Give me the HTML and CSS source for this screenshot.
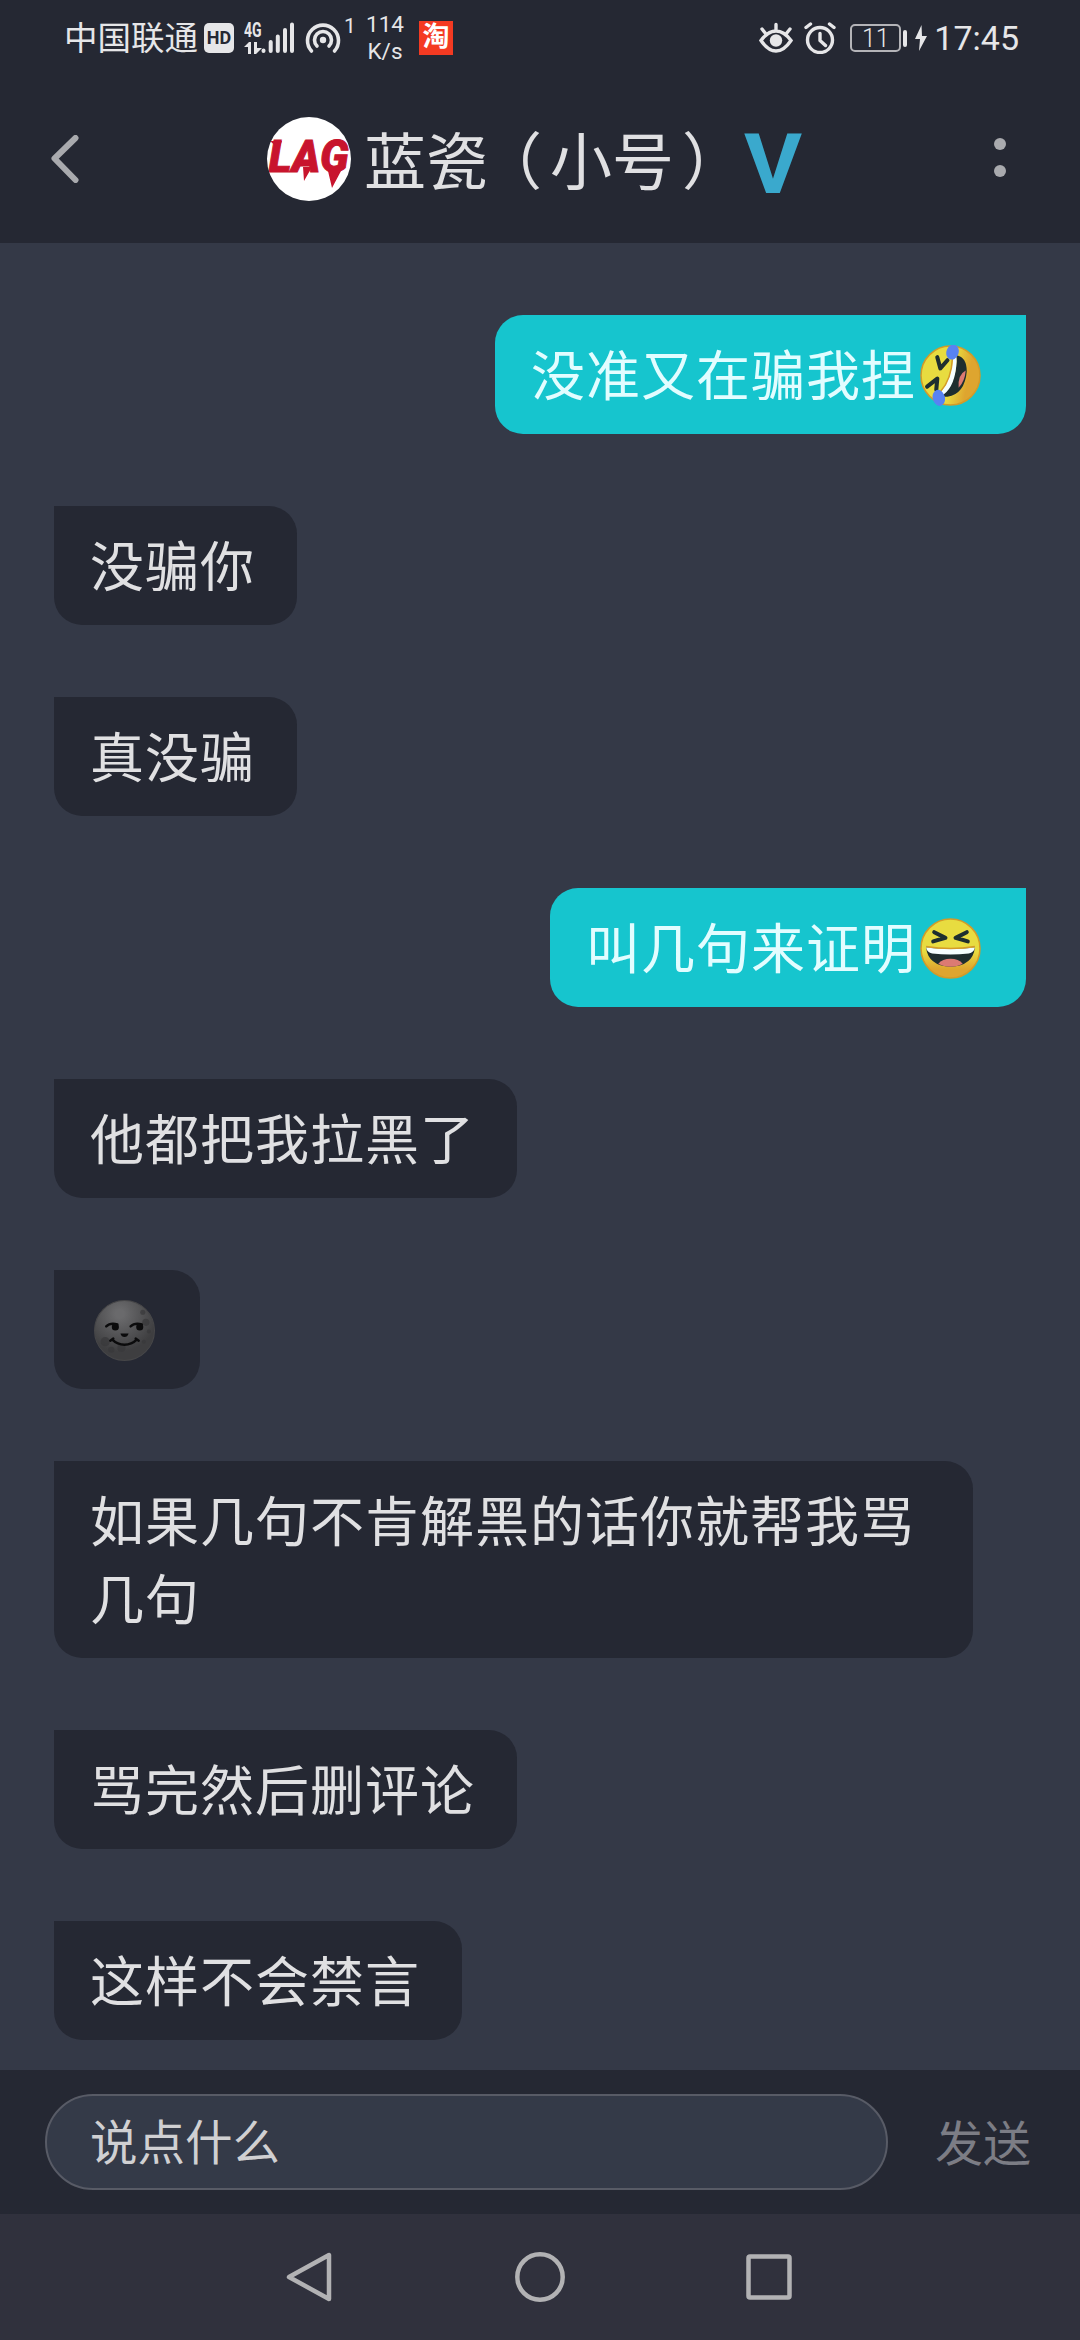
FILE: index.html
```html
<!DOCTYPE html>
<html lang="zh-CN">
<head>
<meta charset="utf-8">
<title>聊天</title>
<link rel="stylesheet" href="styles.css">
</head>
<body>
<div class="screen">
  <div class="status">
    <span class="carrier">中国联通</span>
    <span class="hd">HD</span>
    <div class="signal">
      <div class="net">
        <span class="net-label">4G</span>
        <svg class="net-arrows" width="18" height="12" viewBox="0 0 18 12"><path d="M0 5 5 0h2v12H4V5zM10 0h3v6h5l-6 6h-2z" fill="#e6e6e8"/></svg>
      </div>
      <svg class="bars" width="33" height="32" viewBox="0 0 33 32"><g stroke="#e6e6e8" stroke-width="4" stroke-linecap="round"><path d="M2.5 28.5v.5M9.7 20v9M16.8 14.500v14.500M24 8v21M31 2.500v26.500"/></g></svg>
    </div>
    <svg class="hotspot" width="36" height="32" viewBox="0 0 36 32"><g fill="none" stroke="#e6e6e8" stroke-width="3.600" stroke-linecap="round"><path d="M6.500 29A15.500 15.500 0 1 1 29.500 29"/><path d="M12 24A8.500 8.500 0 1 1 24 24"/></g><circle cx="18" cy="18" r="3.200" fill="#e6e6e8"/></svg>
    <span class="clients">1</span>
    <div class="speed"><span>114</span><span>K/s</span></div>
    <span class="shop">淘</span>
    <div class="status-right">
      <svg width="34" height="32" viewBox="0 0 34 32"><g fill="none" stroke="#e6e6e8" stroke-width="3.400" stroke-linecap="round"><path d="M2 18.500Q9 9 17 9t15 9.500Q25 29 17 29T2 18.500zM17 2.500v5M3 7l4 5M31 7l-4 5"/></g><circle cx="17" cy="18.500" r="6.200" fill="#e6e6e8"/></svg>
      <svg width="32" height="32" viewBox="0 0 32 32"><g fill="none" stroke="#e6e6e8" stroke-width="3.400" stroke-linecap="round" stroke-linejoin="round"><circle cx="16" cy="18" r="12.500"/><path d="M16 11.500v7l5.500 5M2 5.500 6.500 2M30 5.500 25.500 2"/></g></svg>
      <div class="battery"><span class="level">11</span><i class="nub"></i></div>
      <svg class="bolt" width="12" height="26" viewBox="0 0 12 26"><path d="M6.500 0 0 14h5L4 26l8-15H7z" fill="#e6e6e8"/></svg>
      <span class="time">17:45</span>
    </div>
  </div>

  <div class="header">
    <svg class="back" width="28" height="48" viewBox="0 0 28 48"><path d="M24.500 3 3.500 23.500 24.500 45" fill="none" stroke="#a9aaae" stroke-width="6" stroke-linecap="round" stroke-linejoin="round"/></svg>
    <div class="peer">
      <span class="avatar"><span class="avatar-text">LAG</span><svg class="fangs" width="84" height="84" viewBox="0 0 84 84"><path d="M36 50h9l-8 14zM61 54h13L65 71zM3 24h12l-3 8z" fill="#c8142d"/></svg></span>
      <span class="name">蓝瓷<span class="open">（</span>小号<span class="close">）</span></span>
      <span class="vip">V</span>
    </div>
    <div class="more"><i></i><i></i></div>
  </div>

  <div class="chat">
    <div class="bubble mine">没准又在骗我捏<svg class="emoji" viewBox="0 0 60 60"><defs><linearGradient id="gold" x1="0" y1=".4" x2="1" y2=".6"><stop offset=".5" stop-color="#e8dc40"/><stop offset=".8" stop-color="#dea52f"/></linearGradient></defs><circle cx="30" cy="30" r="29" fill="url(#gold)" stroke="#d49b27" stroke-width="1.500"/><path d="M36 10Q46 12 46 26 44 48 27 51 21 51 21 49 37 36 36 10z" fill="#1e2e2f"/><path d="M45 25Q37 29 38 42 44 36 45 25z" fill="#dc7a73"/><path d="M33 11Q36 9 36 16 35 40 23 49 19 50 20 47 31 34 33 11z" fill="#f5ffff"/><path d="M32 12Q31 34 20 46" fill="none" stroke="#d49b27" stroke-width="1.500"/><path d="m17 12 3 11 7-8M7 41l10-8-1 11" fill="none" stroke="#1e2e2f" stroke-width="4" stroke-linecap="round" stroke-linejoin="round"/><ellipse cx="32" cy="7" rx="6" ry="7.500" fill="#5883f2" transform="rotate(20 32 7)"/><ellipse cx="18.500" cy="52" rx="6" ry="8" fill="#5883f2" transform="rotate(-15 18.500 52)"/></svg></div>
    <div class="bubble">没骗你</div>
    <div class="bubble">真没骗</div>
    <div class="bubble mine">叫几句来证明<svg class="emoji" viewBox="0 0 60 60"><defs><linearGradient id="sun" x1="0" y1="0" x2="0" y2="1"><stop offset=".55" stop-color="#e8dc40"/><stop offset=".85" stop-color="#dea52f"/></linearGradient></defs><circle cx="30" cy="30" r="29" fill="url(#sun)" stroke="#d49b27" stroke-width="1.500"/><path d="M6 29Q30 32 54 29 52 47 30 48 8 47 6 29z" fill="#1e2e2f"/><path d="M18 45Q22 40 30 40t12 5Q37 48 30 48T18 45z" fill="#dc7a73"/><path d="M6 29Q30 32 54 29 53 34 48 35 30 37 12 35 7 34 6 29z" fill="#f5ffff"/><path d="M6 28Q30 32 54 28" fill="none" stroke="#d49b27" stroke-width="1.500"/><path d="m14 14 11 5.500L13 23M46 14l-11 5.500L47 23" fill="none" stroke="#1e2e2f" stroke-width="4" stroke-linecap="round" stroke-linejoin="round"/></svg></div>
    <div class="bubble">他都把我拉黑了</div>
    <div class="bubble"><svg class="emoji" viewBox="0 0 60 60"><defs><radialGradient id="moon" cx=".42" cy=".22" r=".7"><stop offset=".1" stop-color="#6a6a6c"/><stop offset=".9" stop-color="#3e3e40"/></radialGradient></defs><circle cx="30" cy="30" r="29.500" fill="url(#moon)" stroke="#464648"/><g fill="#38383a" opacity=".7"><circle cx="11" cy="41" r="4.500"/><circle cx="17" cy="49" r="3"/><circle cx="27" cy="47" r="4"/><circle cx="51" cy="22" r="3.500"/><circle cx="48" cy="12" r="2.500"/><circle cx="54" cy="31" r="2"/><circle cx="49" cy="41" r="2"/></g><g fill="none" stroke="#0b0b0c" stroke-width="2.400" stroke-linecap="round"><path d="M12 26Q16 22 23 24M36 26Q40 22 47 24"/><path d="M18 39Q23 44 30 44t12-5M16 40l3-2M44 40l-3-2"/></g><circle cx="21" cy="26.500" r="3.500" fill="#0b0b0c"/><circle cx="45" cy="26.500" r="3.500" fill="#0b0b0c"/><path d="M26 33h8q-1 3.500-4 3.500T26 33z" fill="#0b0b0c"/></svg></div>
    <div class="bubble">如果几句不肯解黑的话你就帮我骂几句</div>
    <div class="bubble">骂完然后删评论</div>
    <div class="bubble">这样不会禁言</div>
  </div>

  <div class="composer">
    <div class="field">说点什么</div>
    <span class="send">发送</span>
  </div>

  <div class="nav">
    <svg width="50" height="52" viewBox="0 0 50 52"><path d="M43 4v44L3 26z" fill="none" stroke="#b2b2b4" stroke-width="4.500" stroke-linejoin="round"/></svg>
    <svg width="50" height="52" viewBox="0 0 50 52"><circle cx="25" cy="26" r="22.700" fill="none" stroke="#b2b2b4" stroke-width="4.500"/></svg>
    <svg width="50" height="52" viewBox="0 0 50 52"><rect x="4.500" y="5.500" width="41" height="41" rx="1.500" fill="none" stroke="#b2b2b4" stroke-width="4.500"/></svg>
  </div>
</div>
</body>
</html>
```
FILE: styles.css
```css
* { box-sizing: border-box; }
body {
  margin: 0;
  background: #343947;
  font-family: Roboto, "Noto Sans CJK SC", sans-serif;
  color: #e0e0e2;
}
svg { display: block; flex: none; }
.screen {
  width: 1080px;
  height: 2340px;
  display: flex;
  flex-direction: column;
  overflow: hidden;
}

/* status bar */
.status {
  height: 76px;
  flex: none;
  display: flex;
  align-items: center;
  padding: 0 61px 0 64px;
  background: #252833;
  color: #e6e6e8;
}
.carrier { width: 140px; padding-top: 2px; font-size: 33.500px; line-height: 76px; white-space: nowrap; }
.hd {
  width: 30px;
  height: 30px;
  border-radius: 5px;
  background: #e6e6e8;
  color: #252833;
  font-size: 18px;
  font-weight: 700;
  line-height: 30px;
  text-align: center;
}
.signal { display: flex; margin-left: 10px; height: 32px; width: 51px; }
.net { width: 17px; flex: none; display: flex; flex-direction: column; justify-content: space-between; }
.net-label { font-size: 20px; line-height: 16px; font-weight: 700; transform: scaleX(.7); transform-origin: 0 0; }
.hotspot { margin-left: 10px; }
.clients { width: 23px; padding-left: 3px; font-size: 21px; line-height: 24px; align-self: flex-start; margin-top: 14px; }
.speed { width: 42px; display: flex; flex-direction: column; align-items: center; font-size: 22.500px; line-height: 27px; }
.shop {
  width: 34px;
  height: 34px;
  margin-left: 13px;
  background: #f43a22;
  color: #fff;
  font-size: 27px;
  font-weight: 700;
  line-height: 33px;
  text-align: center;
}
.status-right { margin-left: auto; display: flex; align-items: center; }
.status-right > svg + svg { margin-left: 11px; }
.battery { display: flex; align-items: center; gap: 2px; margin-left: 14px; }
.level {
  width: 51px;
  height: 28px;
  border: 2px solid #b4b4b8;
  border-radius: 5px;
  font-size: 25px;
  font-weight: 300;
  line-height: 25px;
  text-align: center;
}
.nub { width: 4px; height: 17px; border-radius: 2px; background: #e6e6e8; }
.bolt { margin-left: 8px; }
.time { margin-left: 7px; font-size: 34px; line-height: 76px; }

/* title bar */
.header {
  height: 167px;
  flex: none;
  display: flex;
  align-items: flex-start;
  padding: 41px 74px 0 51px;
  background: #252833;
}
.back { margin-top: 18px; }
.peer { margin-left: 188px; display: flex; align-items: center; height: 84px; }
.avatar {
  position: relative;
  width: 84px;
  height: 84px;
  border-radius: 50%;
  overflow: hidden;
  background: #fff;
  display: flex;
  align-items: center;
  justify-content: center;
}
.avatar-text {
  font: italic 900 45px Roboto, sans-serif;
  color: #c8142d;
  -webkit-text-stroke: 1px #c8142d;
  transform: translateY(-3px) scaleX(.96);
}
.fangs { position: absolute; left: 0; top: 0; }
.name { margin-left: 13px; width: 380px; padding-top: 9px; font-size: 62px; line-height: 84px; white-space: nowrap; }
/* half-width brackets, spaced by their margins */
.open, .close { font-feature-settings: "halt"; }
.open { margin: 0 8px 0 23px; }
.close { margin-left: 8px; }
.vip {
  padding-top: 12px;
  font-size: 83px;
  line-height: 84px;
  font-weight: 700;
  color: #3aa9cd;
  transform: scaleX(1.07);
  transform-origin: 0 0;
}
.more { margin-left: auto; margin-top: 21px; display: flex; flex-direction: column; gap: 15px; }
.more i { width: 12px; height: 12px; border-radius: 50%; background: #a9aaae; }

/* messages */
.chat {
  flex: 1;
  display: flex;
  flex-direction: column;
  align-items: flex-start;
  gap: 72px;
  padding: 72px 54px 0;
}
.bubble {
  max-width: 919px;
  min-height: 119px;
  padding: 24px 42px 17px 36px;
  border-radius: 0 28px 28px 28px;
  background: #252833;
  font-size: 54px;
  letter-spacing: 1px;
  line-height: 78px;
}
.mine {
  align-self: flex-end;
  border-radius: 28px 0 28px 28px;
  background: #16c5ce;
  color: #e2fdff;
}
.emoji { display: inline-block; width: 61px; height: 61px; margin: 0 3px 0 4px; vertical-align: -10px; }

/* input row */
.composer {
  height: 144px;
  flex: none;
  display: flex;
  align-items: center;
  padding: 0 48px 0 45px;
  background: #252833;
}
.field {
  width: 843px;
  height: 96px;
  border: 2px solid #585b66;
  border-radius: 48px;
  background: #343a48;
  padding: 1px 0 0 43px;
  font-size: 47.500px;
  line-height: 94px;
  color: #d0d0d2;
}
.send { margin: 0 0 4px 47px; font-size: 48px; color: #7c7d85; }

/* system navigation */
.nav {
  height: 126px;
  flex: none;
  display: flex;
  justify-content: center;
  align-items: center;
  gap: 179px;
  background: #30313d;
}
```
